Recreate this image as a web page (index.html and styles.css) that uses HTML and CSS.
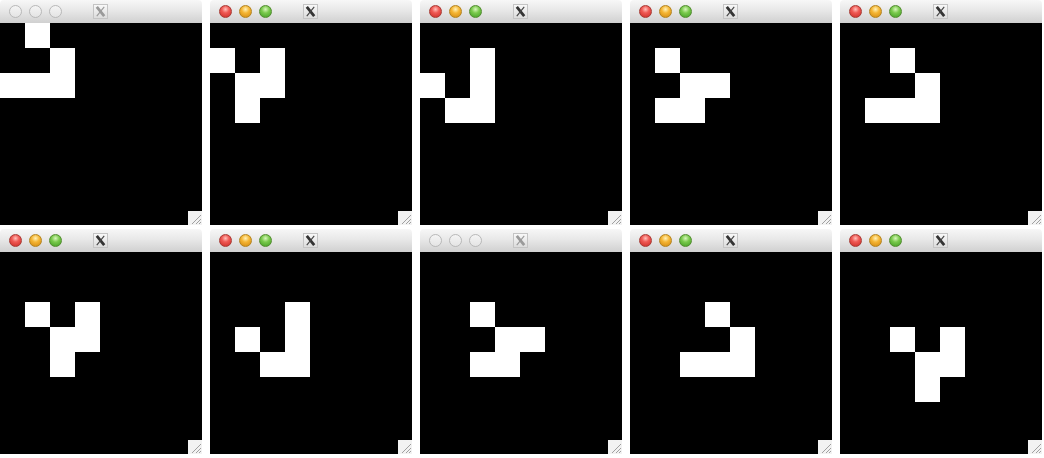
FILE: index.html
```html
<!DOCTYPE html>
<html>
<head>
<meta charset="utf-8">
<link rel="stylesheet" href="styles.css">
</head>
<body>
<div class="desk">
  <!-- window 1 (inactive) -->
  <div class="win inactive">
    <div class="titlebar">
      <div class="lights"><span class="light red"></span><span class="light yellow"></span><span class="light green"></span></div>
      <span class="xicon"><svg viewBox="0 0 14 14" width="14" height="14"><path d="M3 2 L11 12" class="xt"/><path d="M11 2 L3 12" class="xn"/></svg></span>
    </div>
    <div class="board">
      <i class="cell" style="grid-area:1/2"></i><i class="cell" style="grid-area:2/3"></i><i class="cell" style="grid-area:3/1"></i><i class="cell" style="grid-area:3/2"></i><i class="cell" style="grid-area:3/3"></i>
      <span class="grip"><svg viewBox="0 0 14 14" width="14" height="14"><path d="M4 13 L13 4 M8 13 L13 8 M11 13 L13 11"/></svg></span>
    </div>
  </div>
  <!-- window 2 -->
  <div class="win">
    <div class="titlebar">
      <div class="lights"><span class="light red"></span><span class="light yellow"></span><span class="light green"></span></div>
      <span class="xicon"><svg viewBox="0 0 14 14" width="14" height="14"><path d="M3 2 L11 12" class="xt"/><path d="M11 2 L3 12" class="xn"/></svg></span>
    </div>
    <div class="board">
      <i class="cell" style="grid-area:2/1"></i><i class="cell" style="grid-area:2/3"></i><i class="cell" style="grid-area:3/2"></i><i class="cell" style="grid-area:3/3"></i><i class="cell" style="grid-area:4/2"></i>
      <span class="grip"><svg viewBox="0 0 14 14" width="14" height="14"><path d="M4 13 L13 4 M8 13 L13 8 M11 13 L13 11"/></svg></span>
    </div>
  </div>
  <!-- window 3 -->
  <div class="win">
    <div class="titlebar">
      <div class="lights"><span class="light red"></span><span class="light yellow"></span><span class="light green"></span></div>
      <span class="xicon"><svg viewBox="0 0 14 14" width="14" height="14"><path d="M3 2 L11 12" class="xt"/><path d="M11 2 L3 12" class="xn"/></svg></span>
    </div>
    <div class="board">
      <i class="cell" style="grid-area:2/3"></i><i class="cell" style="grid-area:3/1"></i><i class="cell" style="grid-area:3/3"></i><i class="cell" style="grid-area:4/2"></i><i class="cell" style="grid-area:4/3"></i>
      <span class="grip"><svg viewBox="0 0 14 14" width="14" height="14"><path d="M4 13 L13 4 M8 13 L13 8 M11 13 L13 11"/></svg></span>
    </div>
  </div>
  <!-- window 4 -->
  <div class="win">
    <div class="titlebar">
      <div class="lights"><span class="light red"></span><span class="light yellow"></span><span class="light green"></span></div>
      <span class="xicon"><svg viewBox="0 0 14 14" width="14" height="14"><path d="M3 2 L11 12" class="xt"/><path d="M11 2 L3 12" class="xn"/></svg></span>
    </div>
    <div class="board">
      <i class="cell" style="grid-area:2/2"></i><i class="cell" style="grid-area:3/3"></i><i class="cell" style="grid-area:3/4"></i><i class="cell" style="grid-area:4/2"></i><i class="cell" style="grid-area:4/3"></i>
      <span class="grip"><svg viewBox="0 0 14 14" width="14" height="14"><path d="M4 13 L13 4 M8 13 L13 8 M11 13 L13 11"/></svg></span>
    </div>
  </div>
  <!-- window 5 -->
  <div class="win">
    <div class="titlebar">
      <div class="lights"><span class="light red"></span><span class="light yellow"></span><span class="light green"></span></div>
      <span class="xicon"><svg viewBox="0 0 14 14" width="14" height="14"><path d="M3 2 L11 12" class="xt"/><path d="M11 2 L3 12" class="xn"/></svg></span>
    </div>
    <div class="board">
      <i class="cell" style="grid-area:2/3"></i><i class="cell" style="grid-area:3/4"></i><i class="cell" style="grid-area:4/2"></i><i class="cell" style="grid-area:4/3"></i><i class="cell" style="grid-area:4/4"></i>
      <span class="grip"><svg viewBox="0 0 14 14" width="14" height="14"><path d="M4 13 L13 4 M8 13 L13 8 M11 13 L13 11"/></svg></span>
    </div>
  </div>
  <!-- window 6 -->
  <div class="win">
    <div class="titlebar">
      <div class="lights"><span class="light red"></span><span class="light yellow"></span><span class="light green"></span></div>
      <span class="xicon"><svg viewBox="0 0 14 14" width="14" height="14"><path d="M3 2 L11 12" class="xt"/><path d="M11 2 L3 12" class="xn"/></svg></span>
    </div>
    <div class="board">
      <i class="cell" style="grid-area:3/2"></i><i class="cell" style="grid-area:3/4"></i><i class="cell" style="grid-area:4/3"></i><i class="cell" style="grid-area:4/4"></i><i class="cell" style="grid-area:5/3"></i>
      <span class="grip"><svg viewBox="0 0 14 14" width="14" height="14"><path d="M4 13 L13 4 M8 13 L13 8 M11 13 L13 11"/></svg></span>
    </div>
  </div>
  <!-- window 7 -->
  <div class="win">
    <div class="titlebar">
      <div class="lights"><span class="light red"></span><span class="light yellow"></span><span class="light green"></span></div>
      <span class="xicon"><svg viewBox="0 0 14 14" width="14" height="14"><path d="M3 2 L11 12" class="xt"/><path d="M11 2 L3 12" class="xn"/></svg></span>
    </div>
    <div class="board">
      <i class="cell" style="grid-area:3/4"></i><i class="cell" style="grid-area:4/2"></i><i class="cell" style="grid-area:4/4"></i><i class="cell" style="grid-area:5/3"></i><i class="cell" style="grid-area:5/4"></i>
      <span class="grip"><svg viewBox="0 0 14 14" width="14" height="14"><path d="M4 13 L13 4 M8 13 L13 8 M11 13 L13 11"/></svg></span>
    </div>
  </div>
  <!-- window 8 (inactive) -->
  <div class="win inactive">
    <div class="titlebar">
      <div class="lights"><span class="light red"></span><span class="light yellow"></span><span class="light green"></span></div>
      <span class="xicon"><svg viewBox="0 0 14 14" width="14" height="14"><path d="M3 2 L11 12" class="xt"/><path d="M11 2 L3 12" class="xn"/></svg></span>
    </div>
    <div class="board">
      <i class="cell" style="grid-area:3/3"></i><i class="cell" style="grid-area:4/4"></i><i class="cell" style="grid-area:4/5"></i><i class="cell" style="grid-area:5/3"></i><i class="cell" style="grid-area:5/4"></i>
      <span class="grip"><svg viewBox="0 0 14 14" width="14" height="14"><path d="M4 13 L13 4 M8 13 L13 8 M11 13 L13 11"/></svg></span>
    </div>
  </div>
  <!-- window 9 -->
  <div class="win">
    <div class="titlebar">
      <div class="lights"><span class="light red"></span><span class="light yellow"></span><span class="light green"></span></div>
      <span class="xicon"><svg viewBox="0 0 14 14" width="14" height="14"><path d="M3 2 L11 12" class="xt"/><path d="M11 2 L3 12" class="xn"/></svg></span>
    </div>
    <div class="board">
      <i class="cell" style="grid-area:3/4"></i><i class="cell" style="grid-area:4/5"></i><i class="cell" style="grid-area:5/3"></i><i class="cell" style="grid-area:5/4"></i><i class="cell" style="grid-area:5/5"></i>
      <span class="grip"><svg viewBox="0 0 14 14" width="14" height="14"><path d="M4 13 L13 4 M8 13 L13 8 M11 13 L13 11"/></svg></span>
    </div>
  </div>
  <!-- window 10 -->
  <div class="win">
    <div class="titlebar">
      <div class="lights"><span class="light red"></span><span class="light yellow"></span><span class="light green"></span></div>
      <span class="xicon"><svg viewBox="0 0 14 14" width="14" height="14"><path d="M3 2 L11 12" class="xt"/><path d="M11 2 L3 12" class="xn"/></svg></span>
    </div>
    <div class="board">
      <i class="cell" style="grid-area:4/3"></i><i class="cell" style="grid-area:4/5"></i><i class="cell" style="grid-area:5/4"></i><i class="cell" style="grid-area:5/5"></i><i class="cell" style="grid-area:6/4"></i>
      <span class="grip"><svg viewBox="0 0 14 14" width="14" height="14"><path d="M4 13 L13 4 M8 13 L13 8 M11 13 L13 11"/></svg></span>
    </div>
  </div>
</div>
</body>
</html>
```

FILE: styles.css
```css
html, body {
  margin: 0;
  padding: 0;
  background: #ffffff;
}

.desk {
  display: grid;
  grid-template-columns: repeat(5, 202px);
  grid-auto-rows: 225px;
  column-gap: 8px;
  row-gap: 4px;
}

.win {
  display: flex;
  flex-direction: column;
  width: 202px;
  height: 225px;
}

.titlebar {
  height: 23px;
  flex: 0 0 23px;
  display: flex;
  align-items: center;
  border-radius: 4px 4px 0 0;
  background: linear-gradient(#f7f7f7 0%, #e8e8e8 45%, #d0d0d0 100%);
  box-sizing: border-box;
  padding-left: 9px;
}

.lights {
  display: flex;
  gap: 7px;
}

.light {
  width: 13px;
  height: 13px;
  border-radius: 50%;
  box-sizing: border-box;
}

.light.red {
  background: radial-gradient(circle at 50% 30%, #ffc0ba 0%, #f05a55 38%, #c92a24 100%);
  border: 1px solid #a83a34;
}

.light.yellow {
  background: radial-gradient(circle at 50% 30%, #fff2b8 0%, #f5b635 40%, #d0860f 100%);
  border: 1px solid #b3841f;
}

.light.green {
  background: radial-gradient(circle at 50% 30%, #d8f6bb 0%, #7aca4d 40%, #409c24 100%);
  border: 1px solid #528c2f;
}

.inactive .light.red,
.inactive .light.yellow,
.inactive .light.green {
  background: linear-gradient(#f4f4f4, #e4e4e4);
  border: 1px solid #b8b8b8;
}

.xicon {
  display: block;
  width: 15px;
  height: 15px;
  margin-left: 31px;
  box-sizing: border-box;
  border: 1px solid #c4c4c4;
  background: linear-gradient(#f8f8f8, #dcdcdc);
}

.xicon svg {
  display: block;
  width: 13px;
  height: 13px;
}

.xicon .xt {
  stroke: #333333;
  stroke-width: 3;
  fill: none;
}

.xicon .xn {
  stroke: #444444;
  stroke-width: 1.2;
  fill: none;
}

.inactive .xicon .xt,
.inactive .xicon .xn {
  stroke: #9a9a9a;
}

.board {
  position: relative;
  flex: 1 1 auto;
  background: #000000;
  display: grid;
  grid-template-columns: repeat(8, 25px);
  grid-template-rows: repeat(8, 25px);
}

.cell {
  display: block;
  background: #ffffff;
}

.grip {
  position: absolute;
  right: 0;
  bottom: 0;
  width: 14px;
  height: 14px;
  background: #f2f2f2;
}

.grip svg {
  display: block;
}

.grip path {
  stroke: #a0a0a0;
  stroke-width: 1;
  fill: none;
}
```
